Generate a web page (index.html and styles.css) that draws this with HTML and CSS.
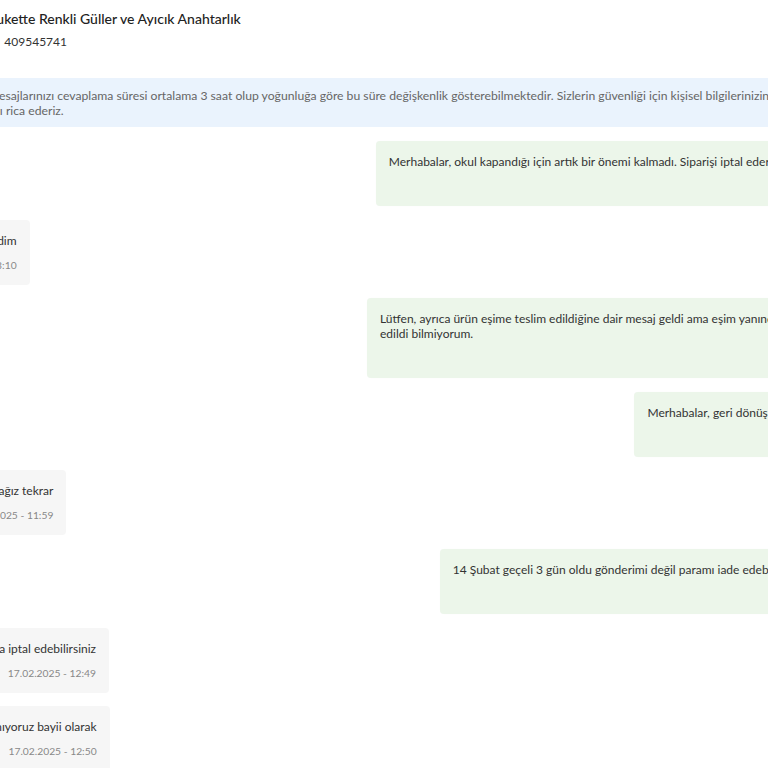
FILE: index.html
```html
<!DOCTYPE html>
<html lang="tr">
<head>
<meta charset="utf-8">
<title>Sipariş Mesajları</title>
<link rel="stylesheet" href="styles.css">
</head>
<body>
<div class="page">
  <header class="order-head">
    <h1 class="order-title">Sevgiliye Bukette Renkli Güller ve Ayıcık Anahtarlık</h1>
    <p class="order-no"><span class="order-no-label">Sipariş No:</span><span class="order-no-value">409545741</span></p>
  </header>
  <div class="notice">Satıcıların mesajlarınızı cevaplama süresi ortalama 3 saat olup yoğunluğa göre bu süre değişkenlik gösterebilmektedir. Sizlerin güvenliği için kişisel bilgilerinizin mesajlarda yer<br>alınmamasını rica ederiz.</div>
  <div class="chat">
    <div class="msg msg-out">
      <p class="msg-text msg-line">Merhabalar, okul kapandığı için artık bir önemi kalmadı. Siparişi iptal ederseniz çok iyi olur.</p>
      <span class="msg-time">15.02.2025 - 10:24</span>
    </div>
    <div class="msg msg-in">
      <p class="msg-text">Talebinizi ilgili birine bildirdim</p>
      <span class="msg-time">15.02.2025 - 13:10</span>
    </div>
    <div class="msg msg-out">
      <p class="msg-text"><span class="msg-line">Lütfen, ayrıca ürün eşime teslim edildiğine dair mesaj geldi ama eşim yanında değildi, kime teslim</span> edildi bilmiyorum.</p>
      <span class="msg-time">15.02.2025 - 13:42</span>
    </div>
    <div class="msg msg-out">
      <p class="msg-text">Merhabalar, geri dönüş yapabilir misiniz?</p>
      <span class="msg-time">17.02.2025 - 09:15</span>
    </div>
    <div class="msg msg-in">
      <p class="msg-text">İnceleyip dönüşü sağlayacağız tekrar</p>
      <span class="msg-time">17.02.2025 - 11:59</span>
    </div>
    <div class="msg msg-out">
      <p class="msg-text">14 Şubat geçeli 3 gün oldu gönderimi değil paramı iade edebilir misiniz lütfen?</p>
      <span class="msg-time">17.02.2025 - 12:31</span>
    </div>
    <div class="msg msg-in">
      <p class="msg-text">Siparişinizi hesabınızdan da iptal edebilirsiniz</p>
      <span class="msg-time">17.02.2025 - 12:49</span>
    </div>
    <div class="msg msg-in">
      <p class="msg-text">Bizler iptal işlemleri yapamıyoruz bayii olarak</p>
      <span class="msg-time">17.02.2025 - 12:50</span>
    </div>
  </div>
</div>
</body>
</html>
```

FILE: styles.css
```css
html, body {
  margin: 0;
  padding: 0;
  background: #ffffff;
}

body {
  overflow: hidden;
  font-family: Lato, "Noto Sans", sans-serif;
  color: #333333;
}

.page {
  margin-left: -300px;
  width: 1172px;
}

.order-head {
  padding: 9px 0 0 230px;
}

.order-title {
  margin: 0;
  font-size: 14px;
  line-height: 20px;
  font-weight: 500;
  color: #222222;
}

.order-no {
  margin: 4px 0 0;
  font-size: 12px;
  line-height: 18px;
  color: #333333;
}

.order-no-value {
  margin-left: 18px;
}

.notice {
  margin-top: 27px;
  background: #eaf3fd;
  padding: 10px 12px 9px 234px;
  font-size: 12.2px;
  line-height: 15px;
  color: #666666;
  white-space: nowrap;
}

.chat {
  display: flex;
  flex-direction: column;
  gap: 13.6px;
  padding: 14px 0 14px 150px;
}

.msg {
  box-sizing: border-box;
  max-width: 505px;
  padding: 13px;
  border-radius: 4px;
}

.msg-in {
  align-self: flex-start;
  background: #f6f6f6;
}

.msg-out {
  align-self: flex-end;
  background: #ecf6ea;
  box-shadow: 0 0 1px rgba(0, 0, 0, 0.04);
}

.msg-text {
  margin: 0;
  font-size: 12px;
  line-height: 15px;
  color: #333333;
}

.msg-line {
  white-space: nowrap;
}

.msg-time {
  display: block;
  margin-top: 10px;
  font-size: 10.3px;
  line-height: 14px;
  color: #888888;
  text-align: right;
}
```
